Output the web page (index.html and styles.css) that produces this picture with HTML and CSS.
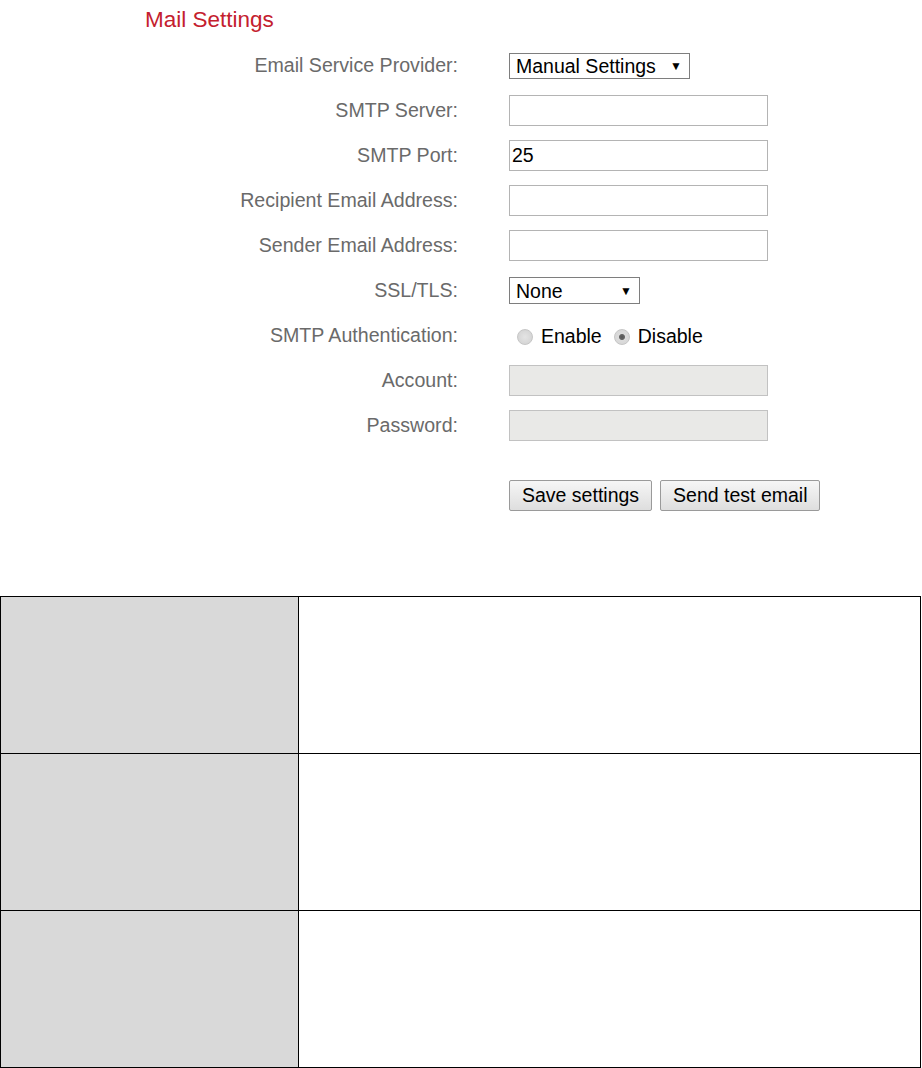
FILE: index.html
```html
<!DOCTYPE html>
<html lang="en">
  <head>
    <meta charset="UTF-8" />
    <title>Mail Settings</title>
    <link rel="stylesheet" href="styles.css">
  </head>
  <body>
    <div class="panel">
      <h2 class="title">Mail Settings</h2>

      <form class="mail-form">
        <label for="provider">Email Service Provider:</label>
        <div class="field">
          <span class="select-wrap wide">
            <select id="provider">
              <option>Manual Settings</option>
            </select>
          </span>
        </div>

        <label for="smtp_server">SMTP Server:</label>
        <div class="field"><input type="text" id="smtp_server" /></div>

        <label for="smtp_port">SMTP Port:</label>
        <div class="field"><input type="text" id="smtp_port" value="25" /></div>

        <label for="recipient">Recipient Email Address:</label>
        <div class="field"><input type="text" id="recipient" /></div>

        <label for="sender">Sender Email Address:</label>
        <div class="field"><input type="text" id="sender" /></div>

        <label for="ssl">SSL/TLS:</label>
        <div class="field">
          <span class="select-wrap narrow">
            <select id="ssl">
              <option>None</option>
            </select>
          </span>
        </div>

        <label>SMTP Authentication:</label>
        <div class="field radios">
          <label class="radio"><input type="radio" name="auth" /> Enable</label>
          <label class="radio"><input type="radio" name="auth" checked /> Disable</label>
        </div>

        <label for="account">Account:</label>
        <div class="field"><input type="text" id="account" disabled /></div>

        <label for="password">Password:</label>
        <div class="field"><input type="password" id="password" disabled /></div>
      </form>

      <div class="buttons">
        <button type="button" class="btn">Save settings</button>
        <button type="button" class="btn">Send test email</button>
      </div>
    </div>

    <table class="desc">
      <tr>
        <td class="key"></td>
        <td class="val"></td>
      </tr>
      <tr>
        <td class="key"></td>
        <td class="val"></td>
      </tr>
      <tr>
        <td class="key"></td>
        <td class="val"></td>
      </tr>
    </table>
  </body>
</html>
```

FILE: styles.css
```css
body {
  margin: 0;
  background: #ffffff;
  font-family: "Liberation Sans", Arial, sans-serif;
  color: #000;
}
.panel {
  padding-top: 9px;
}
.title {
  margin: 0 0 12px 145px;
  font-size: 22.5px;
  line-height: 22px;
  font-weight: normal;
  color: #c4202e;
}
.mail-form {
  display: grid;
  grid-template-columns: 458px auto;
  grid-auto-rows: 45px;
  column-gap: 51px;
  align-items: center;
}
.mail-form > label {
  text-align: right;
  font-size: 19.6px;
  color: #6a6a6a;
}
.field {
  display: flex;
  align-items: center;
}
input[type="text"],
input[type="password"] {
  box-sizing: border-box;
  width: 259px;
  height: 31px;
  margin: 0;
  padding: 0 2px;
  border: 1px solid #b4b4b4;
  font-family: "Liberation Sans", Arial, sans-serif;
  font-size: 19.5px;
  color: #000;
  background: #fff;
}
input:disabled {
  background: #e9e9e7;
  border-color: #c2c2c2;
}
.select-wrap {
  position: relative;
  display: inline-block;
}
.select-wrap select {
  appearance: none;
  -webkit-appearance: none;
  box-sizing: border-box;
  height: 26px;
  margin: 0;
  padding: 0 0 0 6px;
  border: 1px solid #7e7e7e;
  border-radius: 0;
  background: #fff;
  font-family: "Liberation Sans", Arial, sans-serif;
  font-size: 19.5px;
  color: #000;
}
.select-wrap.wide select {
  width: 181px;
}
.select-wrap.narrow select {
  width: 131px;
  height: 27px;
}
.select-wrap::after {
  content: "\25BC";
  position: absolute;
  right: 8px;
  top: 50%;
  transform: translateY(-50%);
  font-size: 12px;
  color: #000;
  pointer-events: none;
}
.radios {
  gap: 12px;
  padding-left: 8px;
  padding-top: 2px;
}
.radio {
  display: flex;
  align-items: center;
  gap: 8px;
  font-size: 19.5px;
  color: #000;
}
.radio input {
  appearance: none;
  -webkit-appearance: none;
  width: 16px;
  height: 16px;
  margin: 0;
  border: 1px solid #c6c6c6;
  border-radius: 50%;
  background: radial-gradient(circle, #e4e4e4 0, #d6d6d6 70%);
}
.radio input:checked {
  background: radial-gradient(circle, #555 0, #666 2.5px, #dcdcdc 3.5px, #d4d4d4 100%);
}
.buttons {
  display: flex;
  gap: 8px;
  margin: 32px 0 0 509px;
}
.btn {
  height: 31px;
  padding: 0 12px;
  border: 1px solid #9a9a9a;
  border-radius: 2px;
  background: linear-gradient(#f6f6f6, #dedede);
  font-family: "Liberation Sans", Arial, sans-serif;
  font-size: 19.5px;
  color: #000;
}
.desc {
  margin-top: 85px;
  width: 921px;
  border-collapse: collapse;
}
.desc td {
  height: 156px;
  border: 1px solid #000;
  padding: 0;
}
.desc .key {
  width: 297px;
  background: #d9d9d9;
}
.desc .val {
  background: #fff;
}
```
